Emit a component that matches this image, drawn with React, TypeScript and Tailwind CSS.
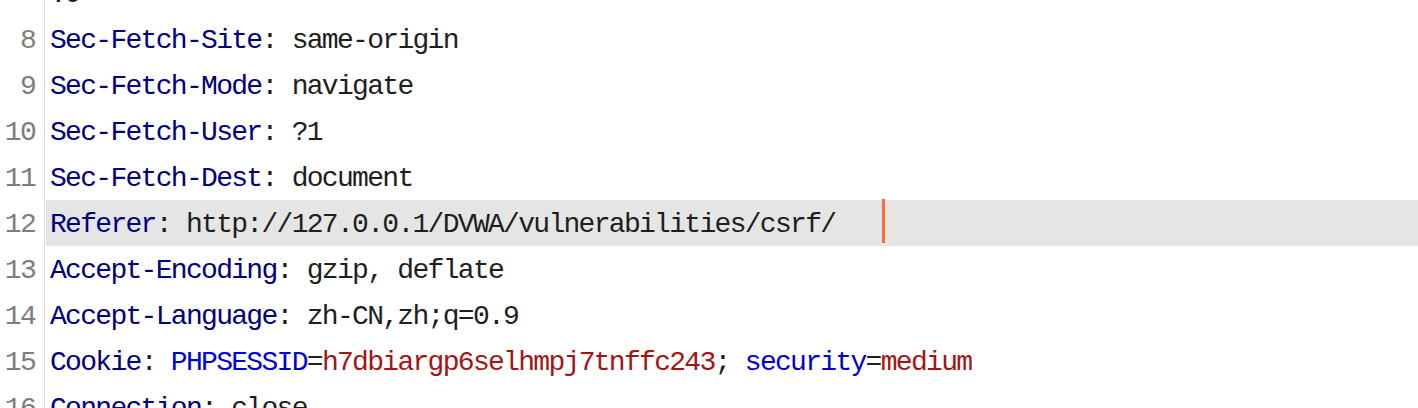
import React from "react";

type Seg = { t: string; c: string };

const KEY = "text-[#000080]";
const VAL = "text-[#1e1e1e]";
const ATTR = "text-[#0000d0]";
const STR = "text-[#a31515]";

const Lines: { n: string; segs: Seg[]; active?: boolean }[] = [
  { n: "", segs: [{ t: ".9", c: VAL }] },
  { n: "8", segs: [{ t: "Sec-Fetch-Site", c: KEY }, { t: ": same-origin", c: VAL }] },
  { n: "9", segs: [{ t: "Sec-Fetch-Mode", c: KEY }, { t: ": navigate", c: VAL }] },
  { n: "10", segs: [{ t: "Sec-Fetch-User", c: KEY }, { t: ": ?1", c: VAL }] },
  { n: "11", segs: [{ t: "Sec-Fetch-Dest", c: KEY }, { t: ": document", c: VAL }] },
  {
    n: "12",
    active: true,
    segs: [{ t: "Referer", c: KEY }, { t: ": http://127.0.0.1/DVWA/vulnerabilities/csrf/", c: VAL }],
  },
  { n: "13", segs: [{ t: "Accept-Encoding", c: KEY }, { t: ": gzip, deflate", c: VAL }] },
  { n: "14", segs: [{ t: "Accept-Language", c: KEY }, { t: ": zh-CN,zh;q=0.9", c: VAL }] },
  {
    n: "15",
    segs: [
      { t: "Cookie", c: KEY },
      { t: ": ", c: VAL },
      { t: "PHPSESSID", c: ATTR },
      { t: "=", c: VAL },
      { t: "h7dbiargp6selhmpj7tnffc243", c: STR },
      { t: "; ", c: VAL },
      { t: "security", c: ATTR },
      { t: "=", c: VAL },
      { t: "medium", c: STR },
    ],
  },
  { n: "16", segs: [{ t: "Connection", c: KEY }, { t: ": close", c: VAL }] },
];

const App: React.FC = () => {
  return (
    <div className="w-[1418px] h-[408px] overflow-hidden bg-white">
      <div
        className="-mt-[30px] text-[28px] leading-[46px] tracking-[-1.7px] whitespace-pre"
        style={{ fontFamily: '"Liberation Mono", "DejaVu Sans Mono", monospace' }}
      >
        {Lines.map(({ n, segs, active }, i) => (
          <div key={i} className="flex h-[46px]">
            <div className="w-[45px] shrink-0 border-r border-[#dcdcdc] pr-[9px] text-right text-[#7d7d7d] pt-[2px]">
              {n}
            </div>
            <div
              className={
                "flex-1 ml-[1px] pl-[4px] pt-[2px] flex items-start " +
                (active ? "bg-[#e5e5e5]" : "")
              }
            >
              <span>
                {segs.map((s, j) => (
                  <span key={j} className={s.c}>
                    {s.t}
                  </span>
                ))}
              </span>
              {active && (
                <span className="ml-[47px] -mt-[3px] inline-block w-[3px] h-[44px] bg-[#ff6a3d]" />
              )}
            </div>
          </div>
        ))}
      </div>
    </div>
  );
};

export default App;
